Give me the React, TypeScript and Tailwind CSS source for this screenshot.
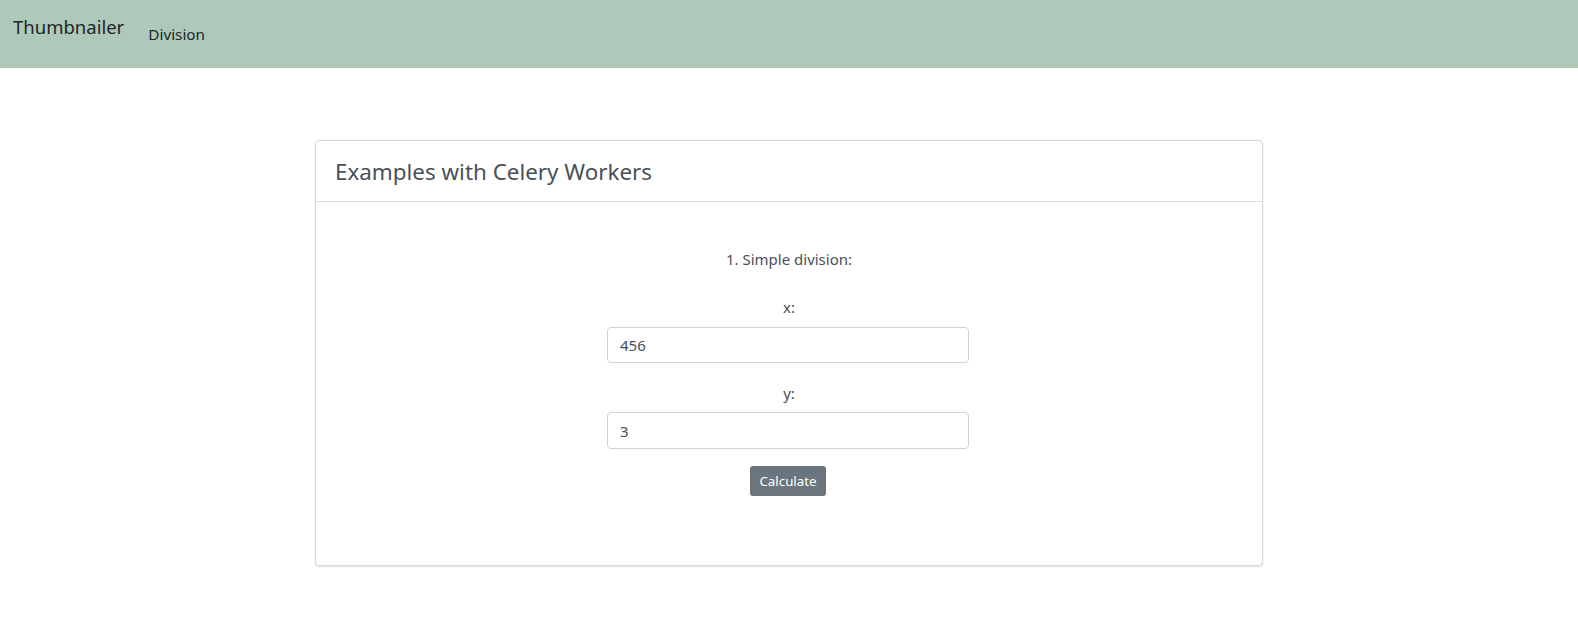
import React from "react";

export default function App() {
  const font = { fontFamily: '"Segoe UI", "Noto Sans", sans-serif' };
  return (
    <div className="min-h-[635px] bg-white" style={font}>
      <nav className="h-[68px] bg-[#aec9b9] flex items-start px-[13px]">
        <div className="mt-[13px] text-[18.5px] leading-[28px] text-[#212529]">Thumbnailer</div>
        <div className="ml-[24px] mt-[23px] text-[15.3px] leading-[22px] text-[#212529]">Division</div>
      </nav>
      <div className="pt-[72px]">
        <div className="mx-auto w-[948px] border border-[#d8d8d8] rounded-[4px] shadow-[0_1px_2px_rgba(0,0,0,0.12)] bg-white">
          <div className="h-[61px] border-b border-[#dcdcdc] px-[19px] flex items-center">
            <h4 className="text-[22.4px] leading-[29px] text-[#495057] font-normal">Examples with Celery Workers</h4>
          </div>
          <div className="flex flex-col items-center pt-[45px] pb-[69px] text-[15px] text-[#495057]">
            <p className="leading-[24px]">1. Simple division:</p>
            <label className="leading-[24px] mt-[24px]">x:</label>
            <input
              defaultValue="456"
              className="mt-[8px] w-[362px] h-[36px] border border-[#ced4da] rounded-[4px] px-[12px] text-[15px] text-[#495057] outline-none -ml-[2px]"
              style={font}
            />
            <label className="leading-[24px] mt-[18px]">y:</label>
            <input
              defaultValue="3"
              className="mt-[7px] w-[362px] h-[37px] border border-[#ced4da] rounded-[4px] px-[12px] text-[15px] text-[#495057] outline-none -ml-[2px]"
              style={font}
            />
            <button
              className="mt-[17px] h-[30px] px-[9px] rounded-[3px] bg-[#6c757d] text-white text-[13.3px] leading-[20px] -ml-[2px]"
              style={font}
            >
              Calculate
            </button>
          </div>
        </div>
      </div>
    </div>
  );
}
